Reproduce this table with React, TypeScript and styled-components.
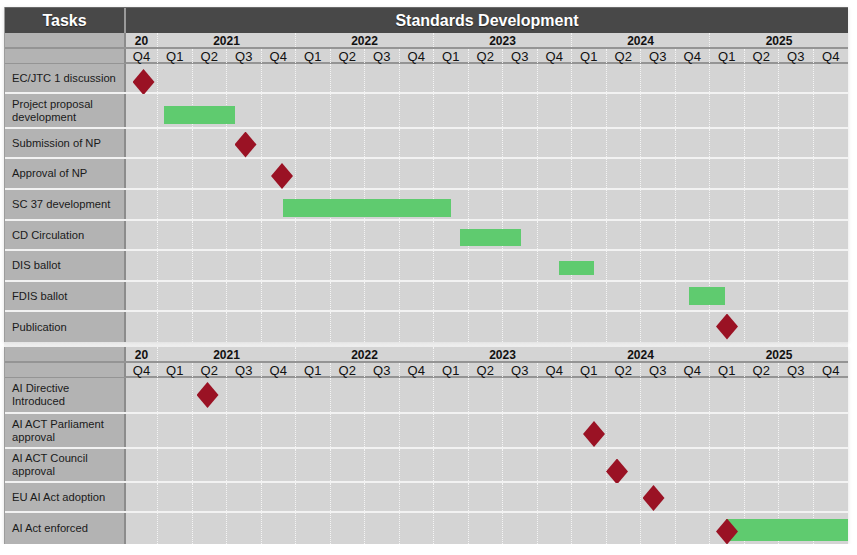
import React from 'react';
import styled, { createGlobalStyle } from 'styled-components';

const GlobalStyle = createGlobalStyle`
    body {
        margin: 0;
        background: #ffffff;
        font-family: "Liberation Sans", Arial, sans-serif;
    }
`;

const TASK_WIDTH = 121;
const FIRST_Q = 32;
const COLS = `${TASK_WIDTH}px ${FIRST_Q}px repeat(20, 1fr)`;

const Page = styled.div`
    width: 844px;
    padding: 7px 0 0 4px;
    display: flex;
    flex-direction: column;
`;

const Chart = styled.div`
    display: flex;
    flex-direction: column;
    box-shadow: 0 1px 4px rgba(0, 0, 0, 0.12);
    border-left: 1px solid #9c9c9c;
`;

const Gap = styled.div`
    height: 5px;
    background: linear-gradient(#e4e4e4, #f6f6f6);
`;

const TitleRow = styled.div`
    display: grid;
    grid-template-columns: ${TASK_WIDTH}px 1fr;
    height: 26px;
    box-sizing: border-box;
    border-top: 1px solid #6a6a6a;
    background: #484848;
    color: #ffffff;
    font-weight: bold;
    font-size: 16px;
    text-shadow: 0 1px 1px rgba(0, 0, 0, 0.5);
`;

const TitleCell = styled.div<{ $divider?: boolean }>`
    display: flex;
    align-items: center;
    justify-content: center;
    border-right: ${p => (p.$divider ? '2px solid #9a9a9a' : 'none')};
`;

const HeadRow = styled.div<{ $h: number; $size: number }>`
    display: grid;
    grid-template-columns: ${COLS};
    height: ${p => p.$h}px;
    box-sizing: border-box;
    border-bottom: 2px solid #949494;
    background: #d4d4d4;
    font-size: ${p => p.$size}px;
    color: #111111;
`;

const HeadTask = styled.div`
    background: #b3b3b3;
    border-right: 2px solid #8c8c8c;
`;

const HeadCell = styled.div<{ $span?: number; $bold?: boolean; $last?: boolean }>`
    grid-column: span ${p => p.$span ?? 1};
    display: flex;
    align-items: center;
    justify-content: center;
    font-weight: ${p => (p.$bold ? 'bold' : 'normal')};
    border-right: ${p => (p.$last ? 'none' : '1px dotted #f4f4f4')};
    line-height: 1;
    padding-top: 1px;
`;

const BodyRow = styled.div<{ $h: number; $last?: boolean }>`
    display: grid;
    grid-template-columns: ${TASK_WIDTH}px 1fr;
    height: ${p => p.$h}px;
    box-sizing: border-box;
    border-bottom: ${p => (p.$last ? 'none' : '2px solid #f2f2f2')};
`;

const TaskCell = styled.div`
    background: #b3b3b3;
    border-right: 2px solid #8c8c8c;
    display: flex;
    align-items: center;
    padding: 0 6px 0 7px;
    font-size: 11.2px;
    line-height: 13px;
    color: #1a1a1a;
`;

const Lane = styled.div`
    position: relative;
    display: grid;
    grid-template-columns: ${FIRST_Q}px repeat(20, 1fr);
    background: #d4d4d4;
`;

const LaneCell = styled.div<{ $last?: boolean }>`
    border-right: ${p => (p.$last ? 'none' : '1px dotted #f4f4f4')};
`;

const Bar = styled.div`
    position: absolute;
    background: #5fcb6f;
`;

const Milestone = styled.div`
    position: absolute;
    width: 22px;
    height: 26px;
    margin-left: -11px;
    margin-top: -13px;
    background: #9a1224;
    clip-path: polygon(50% 0, 100% 50%, 50% 100%, 0 50%);
`;

type Item =
    | { kind: 'bar'; x: number; w: number; y: number; h: number }
    | { kind: 'ms'; x: number; y: number };

type Task = { name: string; h: number; items: Item[] };

const YEARS: [string, number][] = [
    ['20', 1],
    ['2021', 4],
    ['2022', 4],
    ['2023', 4],
    ['2024', 4],
    ['2025', 4],
];

const QUARTERS = ['Q4', ...Array.from({ length: 5 }, () => ['Q1', 'Q2', 'Q3', 'Q4']).flat()];

const standards: Task[] = [
    { name: 'EC/JTC 1 discussion', h: 30, items: [{ kind: 'ms', x: 17.5, y: 18 }] },
    { name: 'Project proposal development', h: 35, items: [{ kind: 'bar', x: 38, w: 71, y: 12, h: 18 }] },
    { name: 'Submission of NP', h: 30, items: [{ kind: 'ms', x: 119.5, y: 15.5 }] },
    { name: 'Approval of NP', h: 31, items: [{ kind: 'ms', x: 156, y: 17 }] },
    { name: 'SC 37 development', h: 31, items: [{ kind: 'bar', x: 157, w: 168, y: 9, h: 18 }] },
    { name: 'CD Circulation', h: 30, items: [{ kind: 'bar', x: 334, w: 61, y: 8, h: 17 }] },
    { name: 'DIS ballot', h: 31, items: [{ kind: 'bar', x: 433, w: 35, y: 10, h: 14 }] },
    { name: 'FDIS ballot', h: 30, items: [{ kind: 'bar', x: 563, w: 36, y: 5, h: 18 }] },
    { name: 'Publication', h: 30, items: [{ kind: 'ms', x: 601, y: 14.5 }] },
];

const regulation: Task[] = [
    { name: 'AI Directive Introduced', h: 36, items: [{ kind: 'ms', x: 81.5, y: 17 }] },
    { name: 'AI ACT Parliament approval', h: 35, items: [{ kind: 'ms', x: 468, y: 20 }] },
    { name: 'AI ACT Council approval', h: 34, items: [{ kind: 'ms', x: 491, y: 22.5 }] },
    { name: 'EU AI Act adoption', h: 30, items: [{ kind: 'ms', x: 527.5, y: 15 }] },
    {
        name: 'AI Act enforced',
        h: 31,
        items: [
            { kind: 'bar', x: 600, w: 122, y: 6, h: 22 },
            { kind: 'ms', x: 601, y: 18.5 },
        ],
    },
];

const TimeHeader = () => (
    <>
        <HeadRow $h={16} $size={12}>
            <HeadTask />
            {YEARS.map(([year, span], i) => (
                <HeadCell key={year} $span={span} $bold $last={i === YEARS.length - 1}>
                    {year}
                </HeadCell>
            ))}
        </HeadRow>
        <HeadRow $h={15} $size={13}>
            <HeadTask />
            {QUARTERS.map((q, i) => (
                <HeadCell key={i} $last={i === QUARTERS.length - 1}>
                    {q}
                </HeadCell>
            ))}
        </HeadRow>
    </>
);

const TaskRows = ({ tasks }: { tasks: Task[] }) => (
    <>
        {tasks.map((task, r) => (
            <BodyRow key={task.name} $h={task.h} $last={r === tasks.length - 1}>
                <TaskCell>{task.name}</TaskCell>
                <Lane>
                    {QUARTERS.map((_, i) => (
                        <LaneCell key={i} $last={i === QUARTERS.length - 1} />
                    ))}
                    {task.items.map((item, i) =>
                        item.kind === 'bar' ? (
                            <Bar key={i} style={{ left: item.x, top: item.y, width: item.w, height: item.h }} />
                        ) : (
                            <Milestone key={i} style={{ left: item.x, top: item.y }} />
                        )
                    )}
                </Lane>
            </BodyRow>
        ))}
    </>
);

const App = () => {
    return (
        <Page>
            <GlobalStyle />
            <Chart>
                <TitleRow>
                    <TitleCell $divider>Tasks</TitleCell>
                    <TitleCell>Standards Development</TitleCell>
                </TitleRow>
                <TimeHeader />
                <TaskRows tasks={standards} />
            </Chart>
            <Gap />
            <Chart>
                <TimeHeader />
                <TaskRows tasks={regulation} />
            </Chart>
        </Page>
    );
};

export default App;
